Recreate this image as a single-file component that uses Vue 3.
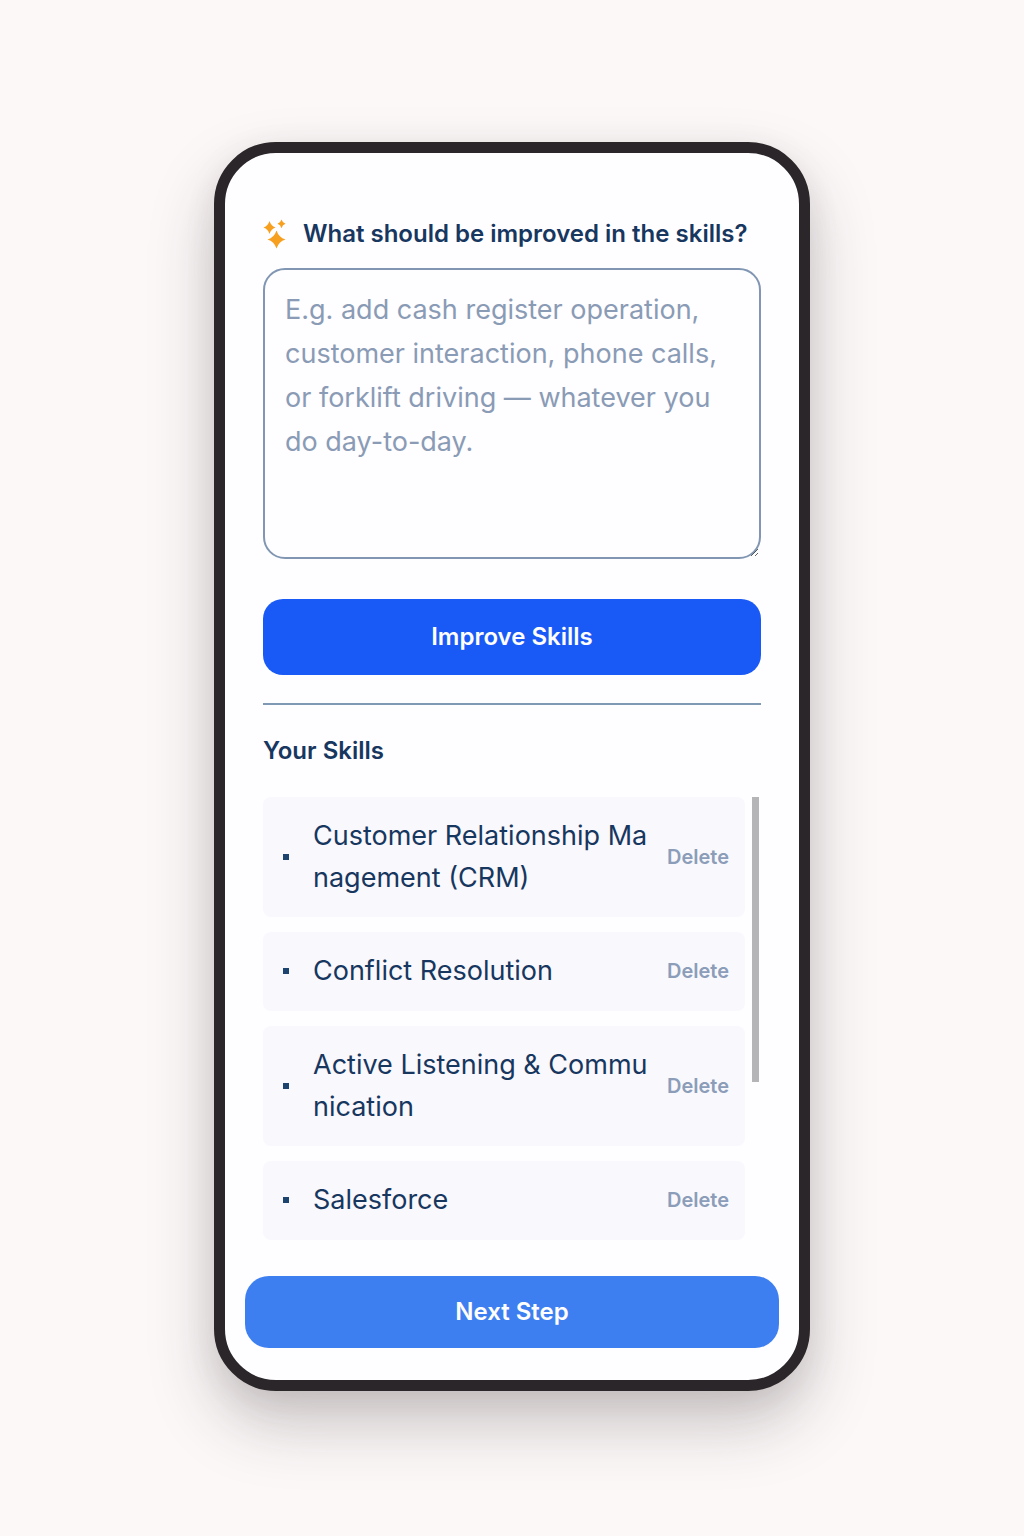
<script setup>
import { ref } from 'vue'

const request = ref('')
const placeholder =
  'E.g. add cash register operation, customer interaction, phone calls, or forklift driving — whatever you do day-to-day.'

const skills = ref([
  'Customer Relationship Management (CRM)',
  'Conflict Resolution',
  'Active Listening & Communication',
  'Salesforce',
])

function removeSkill(index) {
  skills.value.splice(index, 1)
}
</script>

<template>
  <div class="page">
    <main class="phone">
      <section class="content">
        <label class="prompt" for="request">
          <svg class="sparkles" viewBox="0 0 24 30" aria-hidden="true">
            <path d="M6.500 2Q7.900 6.900 12.500 8.500Q7.900 10.100 6.500 15Q5.100 10.100 0.500 8.500Q5.100 6.900 6.500 2Z" />
            <path d="M18.500 0.500Q19.500 3.800 22.500 4.800Q19.500 5.800 18.500 9.200Q17.500 5.800 14.500 4.800Q17.500 3.800 18.500 0.500Z" />
            <path d="M13.500 11.500Q15.700 18.400 22.500 20.500Q15.700 22.600 13.500 29.500Q11.300 22.600 4.500 20.500Q11.300 18.400 13.500 11.500Z" />
          </svg>
          <span>What should be improved in the skills?</span>
        </label>
        <textarea id="request" v-model="request" class="request" :placeholder="placeholder"></textarea>
        <button class="improve" type="button">Improve Skills</button>
        <hr class="divider" />
        <h2 class="heading">Your Skills</h2>
        <div class="scroller">
          <ul class="skills">
            <li v-for="(skill, index) in skills" :key="skill" class="skill">
              <span class="bullet"></span>
              <span class="name">{{ skill }}</span>
              <button class="delete" type="button" @click="removeSkill(index)">Delete</button>
            </li>
          </ul>
          <div class="track">
            <div class="thumb"></div>
          </div>
        </div>
      </section>
      <button class="next" type="button">Next Step</button>
    </main>
  </div>
</template>

<style>
body {
  background: #fcf8f8;
}
</style>

<style scoped>
.page {
  box-sizing: border-box;
  min-height: 100vh;
  display: flex;
  align-items: center;
  justify-content: center;
  padding: 24px 16px 28px;
  font-family: Inter, "Liberation Sans", sans-serif;
  color: #17375f;
}

.phone {
  box-sizing: border-box;
  width: 100%;
  max-width: 596px;
  display: flex;
  flex-direction: column;
  padding: 65px 20px 32px;
  border: 11px solid #2a2629;
  border-radius: 62px;
  background: #fefdff;
  box-shadow: 0 32px 64px rgba(50, 38, 44, 0.25), 0 8px 32px rgba(50, 38, 44, 0.08);
}

.content {
  display: flex;
  flex-direction: column;
  padding: 0 18px;
}

.prompt {
  display: flex;
  align-items: center;
  gap: 16px;
  height: 32px;
  margin-bottom: 18px;
  font-size: 24px;
  font-weight: 600;
  white-space: nowrap;
}

.sparkles {
  flex: none;
  width: 24px;
  height: 30px;
  fill: #f7a01f;
}

.request {
  box-sizing: border-box;
  height: 291px;
  padding: 18px 20px;
  border: 2px solid #8196b2;
  border-radius: 22px;
  background: transparent;
  font: 400 27px/44px Inter, "Liberation Sans", sans-serif;
  color: #17375f;
  resize: vertical;
  outline: none;
}

.request::placeholder {
  color: #8a9bb5;
  opacity: 1;
}

.improve,
.next {
  padding: 0;
  border: 0;
  font: 600 24px/32px Inter, "Liberation Sans", sans-serif;
  color: #fefdff;
  cursor: pointer;
}

.improve {
  height: 76px;
  margin-top: 40px;
  border-radius: 20px;
  background: #195af6;
}

.divider {
  width: 100%;
  height: 2px;
  margin: 28px 0 0;
  border: 0;
  background: #7f98b3;
}

.heading {
  margin: 30px 0;
  font-size: 24px;
  line-height: 32px;
  font-weight: 600;
}

.scroller {
  display: flex;
  gap: 7px;
}

.skills {
  flex: 1;
  min-width: 0;
  display: flex;
  flex-direction: column;
  gap: 15px;
  margin: 0;
  padding: 0;
  list-style: none;
}

.skill {
  box-sizing: border-box;
  min-height: 79px;
  display: flex;
  align-items: center;
  padding: 18px 16px 18px 20px;
  border-radius: 8px;
  background: #f9f8fd;
}

.bullet {
  flex: none;
  width: 6px;
  height: 6px;
  margin-right: 24px;
  background: #1c446e;
}

.name {
  flex: 1;
  font-size: 27px;
  line-height: 42px;
  word-break: break-all;
}

.delete {
  flex: none;
  width: 64px;
  margin-left: 12px;
  padding: 0;
  border: 0;
  background: none;
  font: 600 20px/24px Inter, "Liberation Sans", sans-serif;
  color: #8b9db8;
  text-align: right;
  cursor: pointer;
}

.track {
  flex: none;
  width: 7px;
  margin-right: 2px;
}

.thumb {
  height: 285px;
  background: #b5b4b7;
}

.next {
  height: 72px;
  margin-top: 36px;
  border-radius: 24px;
  background: #3d7ff0;
}
</style>
